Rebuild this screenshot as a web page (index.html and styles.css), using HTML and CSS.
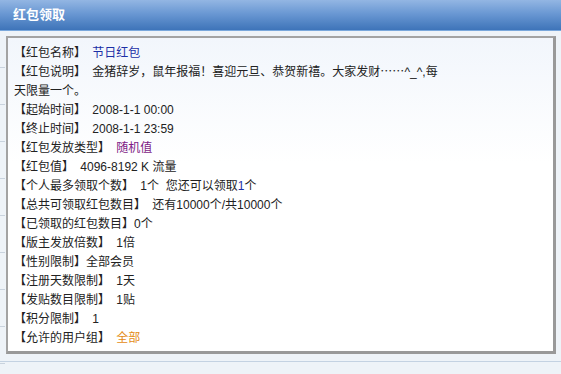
FILE: index.html
```html
<!DOCTYPE html>
<html>
<head>
<meta charset="utf-8">
<link rel="stylesheet" href="styles.css">
</head>
<body>
<div class="page">
  <div class="header">红包领取</div>
  <div class="body">
    <div class="box">
      <div class="content">
        <div class="row"><span class="lbl">【红包名称】</span> <span class="blue">节日红包</span></div>
        <div class="row"><span class="lbl">【红包说明】</span> 金猪辞岁，鼠年报福！喜迎元旦、恭贺新禧。大家发财<span class="cjk">……</span>^_^,每<br>天限量一个。</div>
        <div class="row"><span class="lbl">【起始时间】</span> 2008-1-1 00:00</div>
        <div class="row"><span class="lbl">【终止时间】</span> 2008-1-1 23:59</div>
        <div class="row"><span class="lbl">【红包发放类型】</span> <span class="purple">随机值</span></div>
        <div class="row"><span class="lbl">【红包值】</span> 4096-8192 K 流量</div>
        <div class="row"><span class="lbl">【个人最多领取个数】</span> 1个 &nbsp;您还可以领取<span class="blue">1</span>个</div>
        <div class="row"><span class="lbl">【总共可领取红包数目】</span> 还有10000个/共10000个</div>
        <div class="row">【已领取的红包数目】0个</div>
        <div class="row"><span class="lbl">【版主发放倍数】</span> 1倍</div>
        <div class="row">【性别限制】全部会员</div>
        <div class="row"><span class="lbl">【注册天数限制】</span> 1天</div>
        <div class="row"><span class="lbl">【发贴数目限制】</span> 1贴</div>
        <div class="row"><span class="lbl">【积分限制】</span> 1</div>
        <div class="row"><span class="lbl">【允许的用户组】</span> <span class="orange">全部</span></div>
      </div>
    </div>
    <div class="rule"></div>
  </div>
</div>
</body>
</html>
```
FILE: styles.css
```css
html, body {
  margin: 0;
  padding: 0;
  background: #eef3f8;
}
.page {
  width: 561px;
  height: 374px;
  overflow: hidden;
  font-family: "Liberation Sans", "Noto Sans CJK SC", sans-serif;
  font-size: 12px;
  color: #222;
}
.header {
  height: 30px;
  line-height: 30px;
  padding-left: 13px;
  color: #fff;
  font-weight: bold;
  font-size: 13px;
  background: linear-gradient(#93b6e3, #6a98d3 45%, #3e74b9);
  border-bottom: 1px solid #7aa8dc;
}
.body {
  padding: 5px 6px 0 6px;
  background:
    repeating-linear-gradient(to bottom, transparent 0, transparent 36px, #c9d3de 36px, #c9d3de 37px) left top / 5px 100% no-repeat,
    #eef3f8;
  height: 343px;
  display: flex;
  flex-direction: column;
}
.box {
  width: 545px;
  height: 313px;
  border-top: 2px solid #a3a3a3;
  border-left: 2px solid #a3a3a3;
  border-right: 3px solid #999;
  border-bottom: 3px solid #999;
  background: linear-gradient(#f2f6fc, #fff 40%);
  box-sizing: content-box;
}
.content {
  padding: 6px 0 0 6px;
}
.row {
  line-height: 19px;
  white-space: nowrap;
}
.lbl {
  margin-right: 3px;
}
.cjk {
  font-family: "Noto Sans CJK SC", sans-serif;
  line-height: 0;
}
.blue { color: #1c2fa6; }
.purple { color: #7e1c86; }
.orange { color: #e48c14; }
.rule {
  margin: 7px -6px 0 -6px;
  border-top: 1px solid #c4d2e2;
}
```
